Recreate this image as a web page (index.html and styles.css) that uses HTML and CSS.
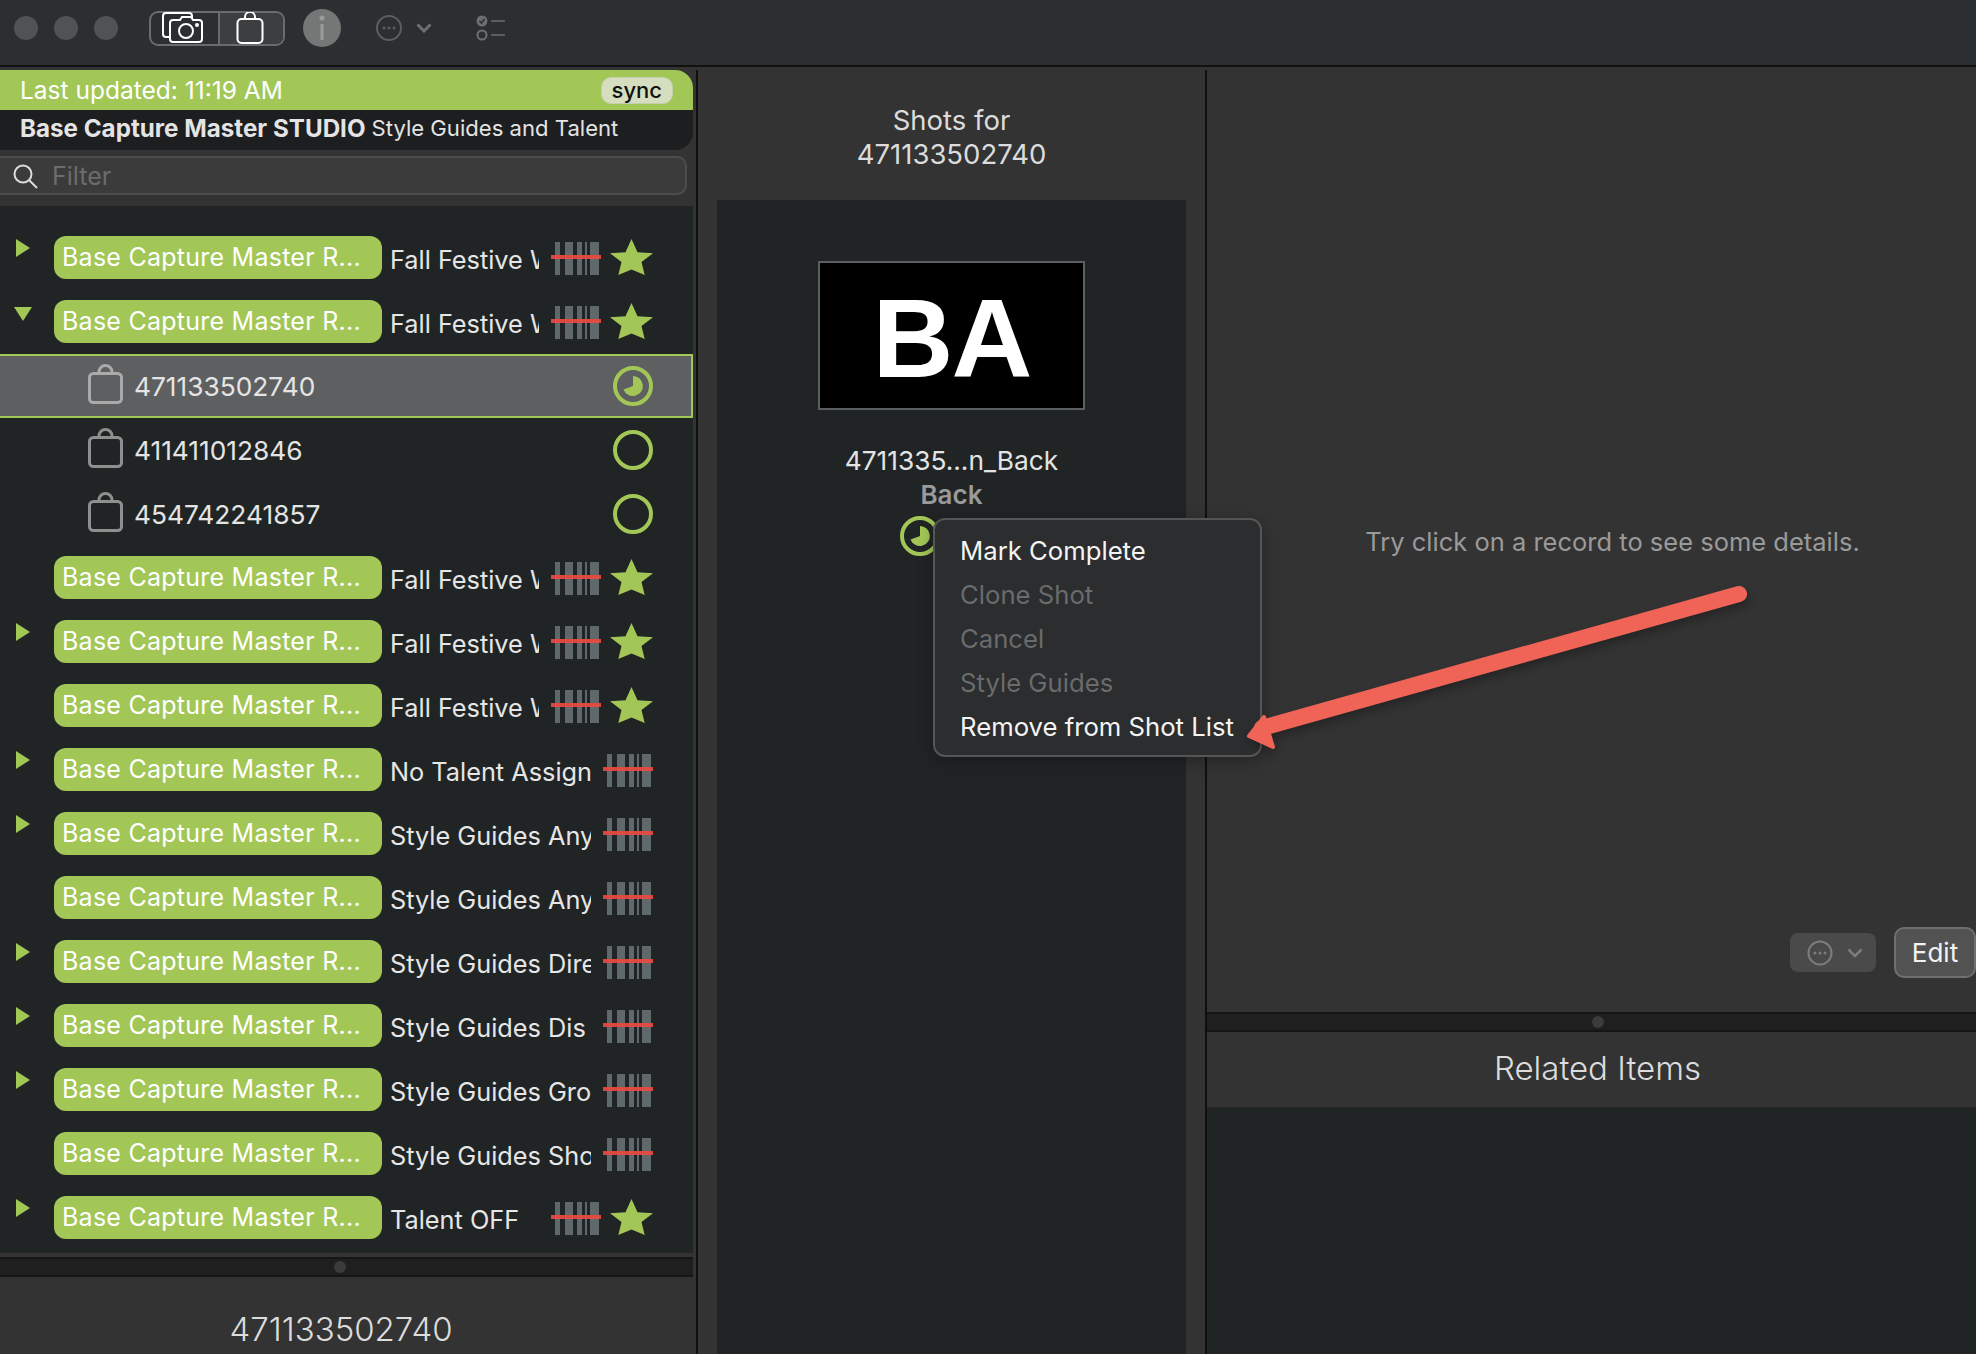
FILE: index.html
```html
<!DOCTYPE html>
<html lang="en">
<head>
    <meta charset="UTF-8">
    <meta name="viewport" content="width=device-width, initial-scale=1.0">
    <title>Base Capture Master STUDIO</title>
    <link rel="stylesheet" href="styles.css">
</head>
<body>
    <svg class="defs" width="0" height="0">
        <symbol id="star" viewBox="0 0 43 37">
            <path d="M21.5 0L27.500 13.300L43 14.300L31.500 23L34.700 36L21.500 30.500L8.300 36L11.500 23L0 14.300L15.500 13.300Z"/>
        </symbol>
        <symbol id="barcode" viewBox="0 0 50 33">
            <rect class="bar" x="4" width="5" height="33"/>
            <rect class="bar" x="14" width="8" height="33"/>
            <rect class="bar" x="26" width="5" height="33"/>
            <rect class="bar" x="34" width="2" height="33"/>
            <rect class="bar" x="39" width="9" height="33"/>
            <rect class="laser" y="13" width="50" height="4"/>
        </symbol>
        <symbol id="bag" viewBox="0 0 35 40">
            <path d="M11 9.5V8a6.5 6.5 0 0 1 13 0v1.5"/>
            <rect x="1.5" y="9.500" width="32" height="29" rx="4"/>
        </symbol>
        <symbol id="ring" viewBox="0 0 40 40">
            <circle cx="20" cy="20" r="18"/>
        </symbol>
        <symbol id="ring-part" viewBox="0 0 40 40">
            <circle cx="20" cy="20" r="18"/>
            <path class="pie" d="M20 10A10 10 0 1 1 10.500 23.500L20 20Z"/>
        </symbol>
    </svg>

    <div class="app">
        <header class="toolbar">
            <div class="lights">
                <span class="light"></span>
                <span class="light"></span>
                <span class="light"></span>
            </div>
            <div class="segment">
                <div class="seg-item">
                    <svg class="tool-icon" width="42" height="32" viewBox="0 0 42 32">
                        <path d="M8 25H4a3 3 0 0 1-3-3V4a3 3 0 0 1 3-3h23a3 3 0 0 1 3 3v2"/>
                        <path d="M11 8h7l2-3h9l2 3h6a3 3 0 0 1 3 3v16a3 3 0 0 1-3 3H11a3 3 0 0 1-3-3V11a3 3 0 0 1 3-3z"/>
                        <circle cx="24" cy="19" r="7"/>
                        <circle cx="35" cy="13" r="1"/>
                    </svg>
                </div>
                <div class="seg-item seg-on">
                    <svg class="tool-icon" width="28" height="32" viewBox="0 0 28 32">
                        <path d="M9 7V5a5 5 0 0 1 10 0v2"/>
                        <rect x="1.500" y="7" width="25" height="24" rx="4"/>
                    </svg>
                </div>
            </div>
            <svg class="info" width="38" height="38" viewBox="0 0 38 38">
                <circle cx="19" cy="19" r="19" fill="#757776"/>
                <circle cx="19" cy="9" r="2.500" fill="#9b9d9c"/>
                <rect x="17.500" y="15" width="3" height="16" fill="#9b9d9c"/>
            </svg>
            <svg class="more" width="26" height="26" viewBox="0 0 26 26">
                <circle cx="13" cy="13" r="12" fill="none" stroke="#5a5e60" stroke-width="2"/>
                <circle cx="8" cy="13" r="1.500" fill="#5a5e60"/>
                <circle cx="13" cy="13" r="1.500" fill="#5a5e60"/>
                <circle cx="18" cy="13" r="1.500" fill="#5a5e60"/>
            </svg>
            <svg class="chevron" width="16" height="10" viewBox="0 0 16 10">
                <path d="M1.500 1.500L8 8l6.500-6.500" fill="none" stroke="#6b6f70" stroke-width="3"/>
            </svg>
            <svg class="checklist" width="30" height="28" viewBox="0 0 30 28">
                <circle cx="6" cy="7" r="5.500" fill="#6b6f70"/>
                <path d="M3.500 7l2 2 3-4" fill="none" stroke="#2c2f31" stroke-width="1.500"/>
                <circle cx="6" cy="21" r="4.500" fill="none" stroke="#6b6f70" stroke-width="2"/>
                <rect x="15" y="6" width="14" height="2" fill="#5a5e60"/>
                <rect x="15" y="20" width="14" height="2" fill="#5a5e60"/>
            </svg>
        </header>

        <div class="main">
            <aside class="left">
                <div class="banner">
                    <div class="banner-top">
                        <span>Last updated: 11:19 AM</span>
                        <button class="sync">sync</button>
                    </div>
                    <div class="banner-sub">
                        <b>Base Capture Master STUDIO</b>
                        <span>Style Guides and Talent</span>
                    </div>
                </div>
                <div class="filter-wrap">
                    <div class="filter">
                        <svg class="filter-icon" width="28" height="26" viewBox="0 0 28 26">
                            <circle cx="11" cy="11" r="8.500"/>
                            <path d="M17 17l8 8"/>
                        </svg>
                        <span>Filter</span>
                    </div>
                </div>

                <div class="list">
                    <div class="row">
                        <span class="arrow-right"></span>
                        <span class="pill">Base Capture Master R...</span>
                        <span class="name name-short">Fall Festive Wear</span>
                        <svg class="barcode"><use href="#barcode"/></svg>
                        <svg class="star"><use href="#star"/></svg>
                    </div>
                    <div class="row">
                        <span class="arrow-down"></span>
                        <span class="pill">Base Capture Master R...</span>
                        <span class="name name-short">Fall Festive Wear</span>
                        <svg class="barcode"><use href="#barcode"/></svg>
                        <svg class="star"><use href="#star"/></svg>
                    </div>
                    <div class="row child selected">
                        <svg class="bag"><use href="#bag"/></svg>
                        <span class="upc">471133502740</span>
                        <svg class="ring"><use href="#ring-part"/></svg>
                    </div>
                    <div class="row child">
                        <svg class="bag"><use href="#bag"/></svg>
                        <span class="upc">411411012846</span>
                        <svg class="ring"><use href="#ring"/></svg>
                    </div>
                    <div class="row child">
                        <svg class="bag"><use href="#bag"/></svg>
                        <span class="upc">454742241857</span>
                        <svg class="ring"><use href="#ring"/></svg>
                    </div>
                    <div class="row">
                        <span class="arrow-none"></span>
                        <span class="pill">Base Capture Master R...</span>
                        <span class="name name-short">Fall Festive Wear</span>
                        <svg class="barcode"><use href="#barcode"/></svg>
                        <svg class="star"><use href="#star"/></svg>
                    </div>
                    <div class="row">
                        <span class="arrow-right"></span>
                        <span class="pill">Base Capture Master R...</span>
                        <span class="name name-short">Fall Festive Wear</span>
                        <svg class="barcode"><use href="#barcode"/></svg>
                        <svg class="star"><use href="#star"/></svg>
                    </div>
                    <div class="row">
                        <span class="arrow-none"></span>
                        <span class="pill">Base Capture Master R...</span>
                        <span class="name name-short">Fall Festive Wear</span>
                        <svg class="barcode"><use href="#barcode"/></svg>
                        <svg class="star"><use href="#star"/></svg>
                    </div>
                    <div class="row">
                        <span class="arrow-right"></span>
                        <span class="pill">Base Capture Master R...</span>
                        <span class="name">No Talent Assigned</span>
                        <svg class="barcode"><use href="#barcode"/></svg>
                    </div>
                    <div class="row">
                        <span class="arrow-right"></span>
                        <span class="pill">Base Capture Master R...</span>
                        <span class="name">Style Guides Any</span>
                        <svg class="barcode"><use href="#barcode"/></svg>
                    </div>
                    <div class="row">
                        <span class="arrow-none"></span>
                        <span class="pill">Base Capture Master R...</span>
                        <span class="name">Style Guides Any</span>
                        <svg class="barcode"><use href="#barcode"/></svg>
                    </div>
                    <div class="row">
                        <span class="arrow-right"></span>
                        <span class="pill">Base Capture Master R...</span>
                        <span class="name">Style Guides Direct</span>
                        <svg class="barcode"><use href="#barcode"/></svg>
                    </div>
                    <div class="row">
                        <span class="arrow-right"></span>
                        <span class="pill">Base Capture Master R...</span>
                        <span class="name">Style Guides Dis</span>
                        <svg class="barcode"><use href="#barcode"/></svg>
                    </div>
                    <div class="row">
                        <span class="arrow-right"></span>
                        <span class="pill">Base Capture Master R...</span>
                        <span class="name">Style Guides Group</span>
                        <svg class="barcode"><use href="#barcode"/></svg>
                    </div>
                    <div class="row">
                        <span class="arrow-none"></span>
                        <span class="pill">Base Capture Master R...</span>
                        <span class="name">Style Guides Shot</span>
                        <svg class="barcode"><use href="#barcode"/></svg>
                    </div>
                    <div class="row">
                        <span class="arrow-right"></span>
                        <span class="pill">Base Capture Master R...</span>
                        <span class="name name-short">Talent OFF</span>
                        <svg class="barcode"><use href="#barcode"/></svg>
                        <svg class="star"><use href="#star"/></svg>
                    </div>
                </div>
                <div class="splitter splitter-left"><span class="grip"></span></div>
                <div class="left-detail">471133502740</div>
            </aside>

            <section class="middle">
                <h2 class="middle-title">Shots for<br>471133502740</h2>
                <div class="shots">
                    <div class="thumb">BA</div>
                    <div class="shot-name">4711335...n_Back</div>
                    <div class="shot-type">Back</div>
                    <div class="shot-status">
                        <svg class="ring"><use href="#ring-part"/></svg>
                        <svg class="barcode"><use href="#barcode"/></svg>
                    </div>
                </div>
            </section>

            <section class="right">
                <div class="details">
                    <p class="hint">Try click on a record to see some details.</p>
                    <div class="actions">
                        <div class="btn-more">
                            <svg width="26" height="26" viewBox="0 0 26 26">
                                <circle cx="13" cy="13" r="11.500" fill="none" stroke="#7d7d7d" stroke-width="2"/>
                                <circle cx="8" cy="13" r="1.500" fill="#7d7d7d"/>
                                <circle cx="13" cy="13" r="1.500" fill="#7d7d7d"/>
                                <circle cx="18" cy="13" r="1.500" fill="#7d7d7d"/>
                            </svg>
                            <svg width="16" height="10" viewBox="0 0 16 10">
                                <path d="M1.500 1.500L8 8l6.500-6.500" fill="none" stroke="#7d7d7d" stroke-width="2.500"/>
                            </svg>
                        </div>
                        <button class="btn-edit">Edit</button>
                    </div>
                </div>
                <div class="splitter splitter-right"><span class="grip"></span></div>
                <h2 class="related-title">Related Items</h2>
                <div class="related"></div>
            </section>
        </div>
    </div>

    <!-- context menu -->
    <ul class="menu">
        <li>Mark Complete</li>
        <li class="off">Clone Shot</li>
        <li class="off">Cancel</li>
        <li class="off">Style Guides</li>
        <li>Remove from Shot List</li>
    </ul>

    <!-- annotation arrow -->
    <svg class="annotation" width="530" height="190" viewBox="0 0 530 190">
        <path class="annotation-line" d="M509 16L32 150"/>
        <path class="annotation-head" d="M19 158L34 139L43 169Z"/>
    </svg>
</body>
</html>
```

FILE: styles.css
```css
* {
    box-sizing: border-box;
}
html, body {
    margin: 0;
    height: 100%;
    overflow: hidden;
}
body {
    background-color: #333;
    color: #e4e4e4;
    font-family: Inter, "Liberation Sans", sans-serif;
}
.defs {
    position: absolute;
}
.app {
    display: flex;
    flex-direction: column;
    height: 1354px;
}

/* toolbar */
.toolbar {
    display: flex;
    align-items: center;
    flex: none;
    height: 67px;
    padding: 0 0 9px 14px;
    background-color: #2c2f31;
    border-bottom: 2px solid #111;
}
.lights {
    display: flex;
    gap: 16px;
}
.light {
    width: 24px;
    height: 24px;
    border-radius: 50%;
    background-color: #4f5354;
}
.segment {
    display: flex;
    width: 136px;
    height: 35px;
    margin-left: 31px;
    border: 2px solid #6a6d6e;
    border-radius: 9px;
}
.seg-item {
    display: flex;
    justify-content: center;
    align-items: center;
    width: 67px;
    padding-right: 4px;
}
.seg-on {
    flex: 1;
    background-color: #3c3e40;
    border-left: 2px solid #6a6d6e;
    border-radius: 0 7px 7px 0;
}
.tool-icon {
    flex: none;
    fill: none;
    stroke: #fff;
    stroke-width: 2;
}
.info {
    margin-left: 18px;
}
.more {
    margin-left: 35px;
}
.chevron {
    margin-left: 14px;
}
.checklist {
    margin-left: 44px;
}

/* columns */
.main {
    display: flex;
    flex: 1;
    min-height: 0;
    padding-top: 3px;
}
.left {
    display: flex;
    flex-direction: column;
    flex: none;
    width: 698px;
    border-right: 2px solid #0f0f0f;
}
.banner {
    margin-right: 3px;
    overflow: hidden;
    border-radius: 0 18px 18px 0;
}
.banner-top {
    display: flex;
    justify-content: space-between;
    align-items: center;
    height: 40px;
    padding: 0 20px;
    background-color: #a3c757;
    color: #fff;
    font-size: 24.5px;
}
.sync {
    height: 27px;
    padding: 0 10px;
    border: 1px solid #c4cfae;
    border-radius: 10px;
    background-color: #d5dfc0;
    color: #111;
    font-family: inherit;
    font-size: 22px;
    font-weight: 500;
    line-height: 22px;
}
.banner-sub {
    display: flex;
    align-items: center;
    gap: 6px;
    height: 40px;
    padding: 0 20px 4px;
    background-color: #1d1e1f;
}
.banner-sub b {
    font-size: 24.2px;
}
.banner-sub span {
    font-size: 22.1px;
}
.filter-wrap {
    height: 56px;
    padding: 6px 9px 0 0;
}
.filter {
    display: flex;
    align-items: center;
    height: 39px;
    padding-left: 12px;
    border: 2px solid #4d4d4d;
    border-left: 0;
    border-radius: 0 10px 10px 0;
    background-color: #3b3b3b;
    color: #6c6c6c;
    font-size: 25px;
}
.filter-icon {
    margin-right: 12px;
    fill: none;
    stroke: #dcdcdc;
    stroke-width: 2;
}
.list {
    height: 1047px;
    flex: none;
    margin-right: 3px;
    padding-top: 20px;
    background-color: #212425;
}
.row {
    display: flex;
    align-items: center;
    height: 64px;
    padding-right: 40px;
}
.arrow-right, .arrow-down, .arrow-none {
    flex: none;
    align-self: flex-start;
    width: 54px;
}
.arrow-right {
    width: 0;
    height: 0;
    margin: 13px 24px 0 16px;
    border-style: solid;
    border-width: 9px 0 9px 14px;
    border-color: transparent transparent transparent #a3c757;
}
.arrow-down {
    width: 0;
    height: 0;
    margin: 17px 22px 0 14px;
    border-style: solid;
    border-width: 14px 9px 0 9px;
    border-color: #a3c757 transparent transparent transparent;
}
.pill {
    flex: none;
    width: 328px;
    height: 43px;
    margin-top: -1px;
    padding-left: 8px;
    border-radius: 12px;
    background-color: #a3c757;
    color: #fff;
    font-size: 25px;
    letter-spacing: 0.25px;
    line-height: 42px;
    white-space: nowrap;
}
.name {
    flex: none;
    width: 201px;
    margin: 2px 0 0 8px;
    overflow: hidden;
    color: #e6e6e6;
    font-size: 25.300px;
    white-space: nowrap;
}
.name-short {
    width: 149px;
}
.barcode {
    flex: none;
    width: 50px;
    height: 33px;
    margin-left: 12px;
    overflow: visible;
}
.bar {
    fill: #5f686a;
}
.laser {
    fill: #ea4a40;
    opacity: 0.92;
}
.star {
    flex: none;
    width: 43px;
    height: 37px;
    margin: -2px 0 0 9px;
    fill: #a3c757;
}
.child {
    padding-left: 88px;
}
.selected {
    padding-left: 88px;
    padding-right: 38px;
    border: 2px solid #a3c757;
    border-left: 0;
    background-color: #5e5f61;
}
.bag {
    flex: none;
    width: 35px;
    height: 40px;
    margin-top: -4px;
    fill: none;
    stroke: #8f8f8f;
    stroke-width: 3;
}
.selected .bag {
    stroke: #aaa;
}
.upc {
    flex: 1;
    margin: 1px 0 0 11px;
    font-size: 26.300px;
}
.ring {
    flex: none;
    width: 40px;
    height: 40px;
    fill: none;
    stroke: #a3c757;
    stroke-width: 4;
}
.pie {
    fill: #a3c757;
    stroke: none;
}

/* splitters */
.splitter {
    display: flex;
    justify-content: center;
    align-items: center;
    flex: none;
    height: 20px;
    border-top: 2px solid #151515;
    border-bottom: 2px solid #151515;
    background-color: #1f1f1f;
}
.splitter-left {
    margin: 4px 3px 0 0;
    padding-right: 14px;
}
.grip {
    width: 12px;
    height: 12px;
    border-radius: 50%;
    background-color: #3b3b3b;
}
.left-detail {
    flex: 1;
    padding: 32px 14px 0 0;
    color: #dcdcdc;
    font-size: 33px;
    font-weight: 300;
    line-height: 40px;
    text-align: center;
}

/* middle */
.middle {
    display: flex;
    flex-direction: column;
    flex: none;
    width: 509px;
    border-right: 2px solid #0f0f0f;
}
.middle-title {
    height: 130px;
    margin: 0;
    padding-top: 33px;
    font-size: 27.500px;
    font-weight: 400;
    line-height: 34px;
    text-align: center;
    color: #dcdcdc;
}
.shots {
    flex: 1;
    margin: 0 19px;
    padding-top: 61px;
    background-color: #212425;
    text-align: center;
}
.thumb {
    width: 267px;
    height: 149px;
    margin: 0 auto;
    border: 2px solid #5a5f60;
    background-color: #000;
    color: #fff;
    font-family: "Liberation Sans", sans-serif;
    font-size: 112px;
    font-weight: 700;
    line-height: 152px;
    letter-spacing: -2px;
}
.shot-name {
    margin-top: 34px;
    font-size: 26.300px;
    line-height: 34px;
}
.shot-type {
    color: #9a9a9a;
    font-size: 26px;
    font-weight: 600;
    line-height: 34px;
}
.shot-status {
    display: flex;
    justify-content: center;
    align-items: center;
    gap: 2px;
    margin-top: 4px;
}

/* right */
.right {
    display: flex;
    flex-direction: column;
    flex: 1;
    min-width: 0;
}
.details {
    display: flex;
    flex-direction: column;
    justify-content: space-between;
    flex: none;
    height: 942px;
    padding: 0 0 34px;
}
.hint {
    margin: 0;
    padding: 455px 0 0 42px;
    color: #9a9a9a;
    font-size: 25.500px;
    line-height: 34px;
    text-align: center;
}
.actions {
    display: flex;
    justify-content: flex-end;
    align-items: center;
    gap: 18px;
}
.btn-more {
    display: flex;
    align-items: center;
    gap: 14px;
    width: 86px;
    height: 39px;
    padding-left: 17px;
    border-radius: 8px;
    background-color: #4a4a4a;
}
.btn-edit {
    width: 82px;
    height: 51px;
    border: 2px solid #6f6f6f;
    border-radius: 10px;
    background-color: #525252;
    color: #f2f2f2;
    font-family: inherit;
    font-size: 26px;
}
.splitter-right {
    padding-left: 12px;
}
.related-title {
    height: 75px;
    margin: 0;
    padding-left: 12px;
    color: #dcdcdc;
    font-size: 33px;
    font-weight: 300;
    line-height: 73px;
    text-align: center;
}
.related {
    flex: 1;
    background-color: #212425;
}

/* overlays */
.menu {
    position: absolute;
    left: 933px;
    top: 518px;
    width: 329px;
    height: 239px;
    margin: 0;
    padding: 9px 0 0 25px;
    list-style: none;
    border: 2px solid #555;
    border-radius: 12px;
    background-color: #2b2d2e;
    box-shadow: 0 4px 16px rgba(0, 0, 0, 0.3);
    color: #f4f4f4;
    font-size: 25.700px;
    line-height: 44px;
}
.off {
    color: #696b6c;
}
.annotation {
    position: absolute;
    left: 1230px;
    top: 578px;
    filter: drop-shadow(2px 5px 5px rgba(0, 0, 0, 0.28));
}
.annotation-line {
    fill: none;
    stroke: #f06457;
    stroke-width: 16;
    stroke-linecap: round;
}
.annotation-head {
    fill: #f06457;
    stroke: #f06457;
    stroke-width: 4;
    stroke-linejoin: round;
}
```
